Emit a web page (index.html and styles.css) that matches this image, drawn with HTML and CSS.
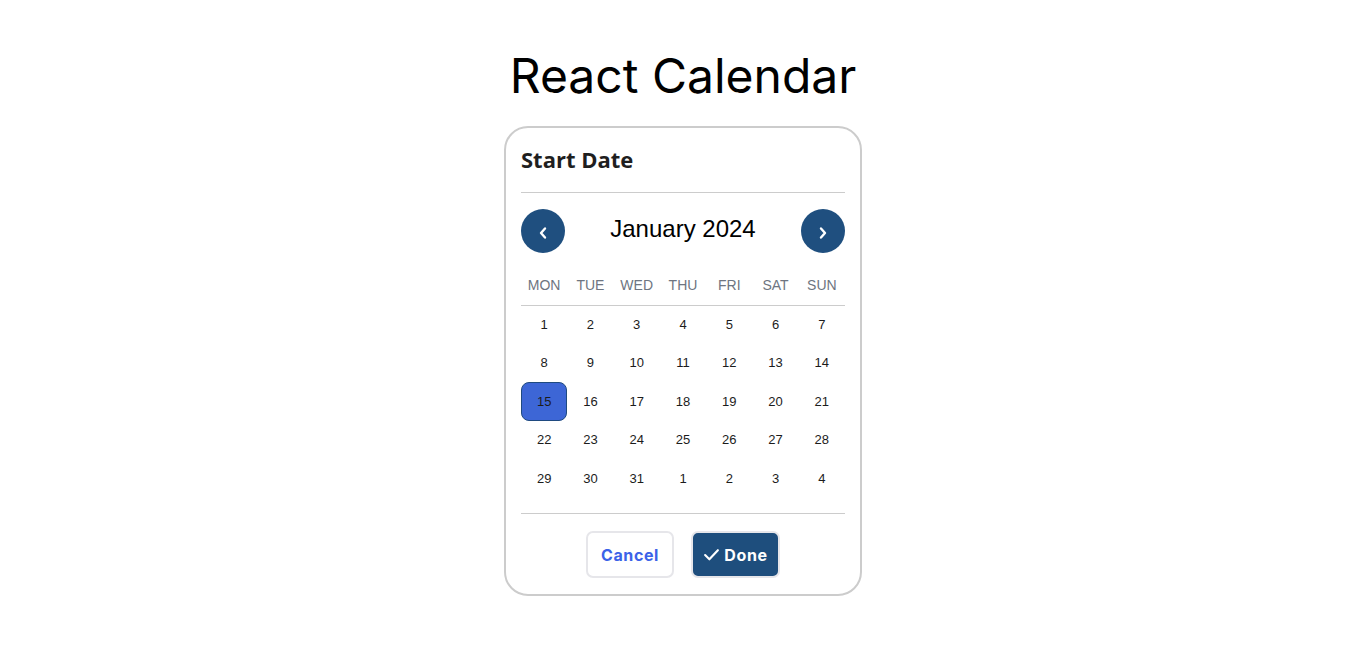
FILE: index.html
```html
<!DOCTYPE html>
<html lang="en">
<head>
<meta charset="utf-8">
<title>React Calendar</title>
<link rel="stylesheet" href="styles.css">
</head>
<body>
<h1 class="title">React Calendar</h1>
<div class="card">
  <h2 class="card-title">Start Date</h2>
  <div class="nav">
    <button class="nav-btn" aria-label="Previous month">
      <svg width="12" height="14" viewBox="0 0 12 14"><polyline points="8,2.5 4,7 8,11.5" fill="none" stroke="#fff" stroke-width="2.4" stroke-linecap="round" stroke-linejoin="round"/></svg>
    </button>
    <div class="month">January 2024</div>
    <button class="nav-btn" aria-label="Next month">
      <svg width="12" height="14" viewBox="0 0 12 14"><polyline points="4,2.5 8,7 4,11.5" fill="none" stroke="#fff" stroke-width="2.4" stroke-linecap="round" stroke-linejoin="round"/></svg>
    </button>
  </div>
  <div class="weekdays">
    <span>MON</span><span>TUE</span><span>WED</span><span>THU</span><span>FRI</span><span>SAT</span><span>SUN</span>
  </div>
  <div class="days">
    <span class="day">1</span><span class="day">2</span><span class="day">3</span><span class="day">4</span><span class="day">5</span><span class="day">6</span><span class="day">7</span>
    <span class="day">8</span><span class="day">9</span><span class="day">10</span><span class="day">11</span><span class="day">12</span><span class="day">13</span><span class="day">14</span>
    <span class="day selected">15</span><span class="day">16</span><span class="day">17</span><span class="day">18</span><span class="day">19</span><span class="day">20</span><span class="day">21</span>
    <span class="day">22</span><span class="day">23</span><span class="day">24</span><span class="day">25</span><span class="day">26</span><span class="day">27</span><span class="day">28</span>
    <span class="day">29</span><span class="day">30</span><span class="day">31</span><span class="day">1</span><span class="day">2</span><span class="day">3</span><span class="day">4</span>
  </div>
  <div class="footer">
    <button class="btn btn-cancel">Cancel</button>
    <button class="btn btn-done">
      <svg width="17" height="17" viewBox="0 0 16 16"><polyline points="2,8.5 6,12.5 14,4" fill="none" stroke="#fff" stroke-width="2" stroke-linecap="round" stroke-linejoin="round"/></svg>
      Done
    </button>
  </div>
</div>
</body>
</html>
```

FILE: styles.css
```css
* { box-sizing: border-box; }

body {
  margin: 0;
  background: #fff;
  font-family: Inter, "Liberation Sans", sans-serif;
  color: #000;
}

.title {
  margin: 47px 0 21px;
  text-align: center;
  font-family: Inter, sans-serif;
  font-size: 48px;
  font-weight: 400;
  line-height: 58px;
}

.card {
  width: 358px;
  margin: 0 auto;
  border: 2px solid #cccccc;
  border-radius: 24px;
  padding: 16px 15px 16px;
  display: flex;
  flex-direction: column;
}

.card-title {
  margin: 0;
  font-family: "Open Sans", sans-serif;
  font-size: 22px;
  font-weight: 700;
  line-height: 30px;
  color: #1f1f1f;
  padding-bottom: 18px;
  border-bottom: 1px solid #cccccc;
}

.nav {
  margin-top: 16px;
  height: 44px;
  display: flex;
  align-items: center;
  justify-content: space-between;
}

.nav-btn {
  width: 44px;
  height: 44px;
  border: none;
  border-radius: 50%;
  background: #1f4f7f;
  padding: 3px 0 0;
  display: flex;
  align-items: center;
  justify-content: center;
}

.month {
  font-family: "Liberation Sans", Arial, sans-serif;
  font-size: 24px;
  color: #000;
  margin-top: -4px;
}

.weekdays {
  margin-top: 20px;
  display: grid;
  grid-template-columns: repeat(7, 1fr);
  height: 33px;
  line-height: 25px;
  border-bottom: 1px solid #cccccc;
  font-family: "Liberation Sans", Arial, sans-serif;
  font-size: 14px;
  color: #6e7581;
  text-align: center;
}

.days {
  margin-top: -1px;
  display: grid;
  grid-template-columns: repeat(7, 1fr);
  grid-auto-rows: 38.5px;
  font-family: "Liberation Sans", Arial, sans-serif;
  font-size: 13px;
  color: #1c1c1c;
  padding-bottom: 15.5px;
  border-bottom: 1px solid #cccccc;
}

.day {
  display: flex;
  align-items: center;
  justify-content: center;
}

.day.selected {
  background: #3d66d6;
  border: 1px solid #1f4a80;
  border-radius: 8px;
}

.footer {
  margin-top: 17px;
  display: flex;
  justify-content: center;
  gap: 17px;
}

.btn {
  height: 47px;
  border: 2px solid #e6e6ea;
  border-radius: 7px;
  font-family: Inter, sans-serif;
  font-size: 16px;
  font-weight: 700;
  letter-spacing: 0.6px;
  display: flex;
  align-items: center;
  justify-content: center;
  gap: 4px;
  cursor: pointer;
}

.btn-cancel {
  width: 88px;
  background: #fff;
  color: #3b62e8;
}

.btn-done {
  width: 89px;
  background: #1e4e7d;
  color: #fff;
}
```
